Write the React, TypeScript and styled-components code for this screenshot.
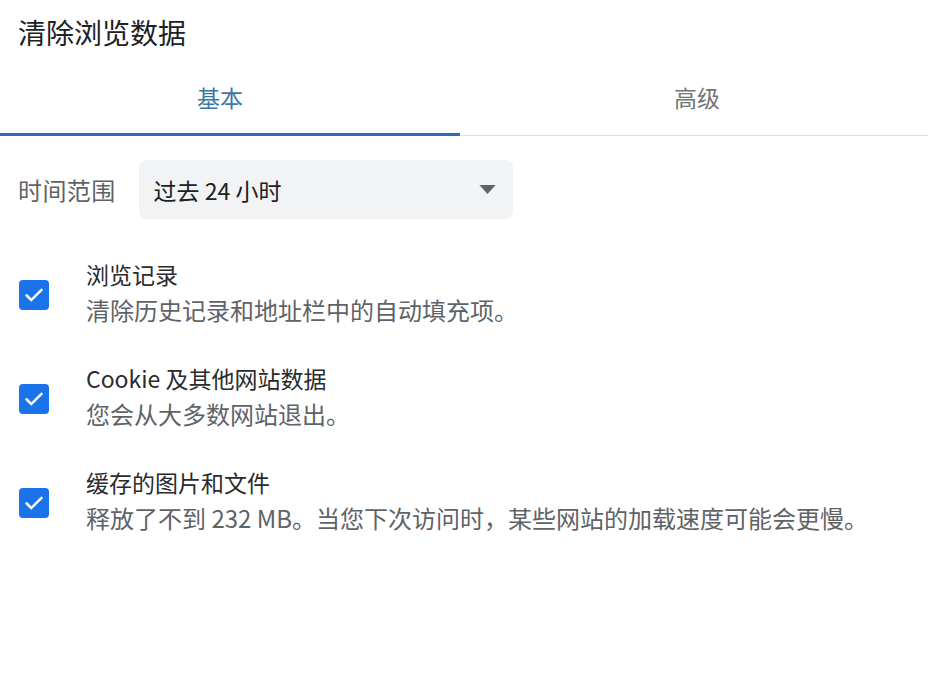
import React, { useState } from 'react';
import styled, { createGlobalStyle } from 'styled-components';

const GlobalStyle = createGlobalStyle`
  body {
    margin: 0;
    background: #fff;
    font-family: "Noto Sans CJK SC", "Noto Sans", sans-serif;
  }
`;

const Page = styled.div`
  width: 928px;
  height: 697px;
  background: #fff;
  overflow: hidden;
`;

const Title = styled.h1`
  margin: 0;
  padding: 14px 0 0 18px;
  height: 46px;
  font-size: 28px;
  font-weight: 400;
  line-height: 36px;
  color: #202124;
`;

const Tabs = styled.div`
  display: grid;
  grid-template-columns: 460px 1fr;
  margin-top: 20px;
  border-bottom: 1px solid #dadce0;
`;

// $shift moves the label off the tab's centre (the first one sits 10px left)
const Tab = styled.button<{ $active?: boolean; $shift?: number }>`
  height: 56px;
  padding: 0 0 20px 0;
  border: none;
  background: none;
  font-family: inherit;
  font-size: 23px;
  line-height: 32px;
  color: ${p => (p.$active ? '#3a77a6' : '#70757a')};
  border-bottom: 3px solid ${p => (p.$active ? '#2f6cb3' : 'transparent')};
  margin-bottom: -1px;
  cursor: pointer;
  span {
    position: relative;
    left: ${p => p.$shift || 0}px;
  }
`;

const RangeRow = styled.div`
  display: flex;
  align-items: center;
  gap: 23px;
  padding: 24px 0 0 18px;
`;

const RangeLabel = styled.span`
  font-size: 24px;
  letter-spacing: 0.4px;
  color: #5f6368;
`;

const Select = styled.div`
  display: flex;
  align-items: center;
  justify-content: space-between;
  width: 374px;
  height: 59px;
  box-sizing: border-box;
  padding: 0 17px 0 15px;
  background: #f1f3f4;
  border-radius: 8px;
  font-size: 23px;
  color: #202124;
`;

const List = styled.div`
  display: flex;
  flex-direction: column;
  gap: 34px;
  padding: 38px 0 0 19px;
`;

const Item = styled.label`
  display: flex;
  align-items: center;
  gap: 37px;
  cursor: pointer;
`;

const Box = styled.span`
  width: 30px;
  height: 30px;
  border-radius: 4px;
  background: #1a73e8;
  display: flex;
  align-items: center;
  justify-content: center;
  flex-shrink: 0;
  margin-top: 6px;
`;

const Texts = styled.div`
  display: flex;
  flex-direction: column;
  gap: 2px;
`;

const ItemTitle = styled.div`
  font-size: 23px;
  line-height: 34px;
  color: #2a2b2e;
`;

const ItemDesc = styled.div`
  font-size: 24px;
  line-height: 34px;
  color: #5f6368;
`;

const items = [
  { title: '浏览记录', desc: '清除历史记录和地址栏中的自动填充项。' },
  { title: 'Cookie 及其他网站数据', desc: '您会从大多数网站退出。' },
  { title: '缓存的图片和文件', desc: '释放了不到 232 MB。当您下次访问时，某些网站的加载速度可能会更慢。' },
];

function Check() {
  return (
    <svg width="22" height="22" viewBox="0 0 24 24">
      <path d="M4 12.5l5 5L20 6.5" fill="none" stroke="#fff" strokeWidth="2.8" strokeLinecap="square" />
    </svg>
  );
}

export default function App() {
  const [tab, setTab] = useState(0);
  return (
    <Page>
      <GlobalStyle />
      <Title>清除浏览数据</Title>
      <Tabs>
        <Tab $active={tab === 0} $shift={-10} onClick={() => setTab(0)}><span>基本</span></Tab>
        <Tab $active={tab === 1} $shift={3} onClick={() => setTab(1)}><span>高级</span></Tab>
      </Tabs>
      <RangeRow>
        <RangeLabel>时间范围</RangeLabel>
        <Select>
          <span>过去 24 小时</span>
          <svg width="17" height="9" viewBox="0 0 18 10">
            <path d="M0 0h18L9 10z" fill="#5f6368" />
          </svg>
        </Select>
      </RangeRow>
      <List>
        {items.map(it => (
          <Item key={it.title}>
            <Box><Check /></Box>
            <Texts>
              <ItemTitle>{it.title}</ItemTitle>
              <ItemDesc>{it.desc}</ItemDesc>
            </Texts>
          </Item>
        ))}
      </List>
    </Page>
  );
}
